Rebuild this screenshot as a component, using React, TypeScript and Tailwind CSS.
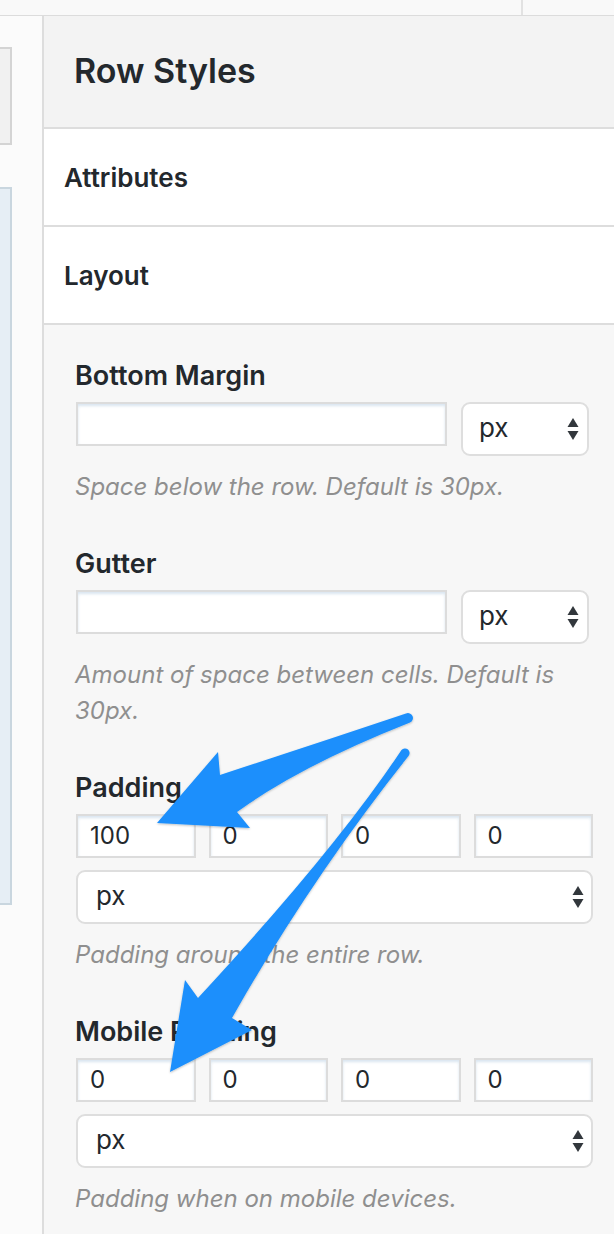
import React from "react";

const SelectArrows = () => (
  <svg width="12" height="26" viewBox="0 0 12 26" className="shrink-0">
    <path d="M6 2 L11.5 11 L0.5 11 Z" fill="#32373c" />
    <path d="M6 24 L11.5 15 L0.5 15 Z" fill="#32373c" />
  </svg>
);

const TextInput = ({ value, className = "" }: { value?: string; className?: string }) => (
  <div
    className={
      "h-[44px] bg-white border-2 border-[#dcdcdc] shadow-[inset_0_2px_3px_rgba(120,160,200,0.28)] flex items-center pl-[12px] text-[24px] text-[#23282d] " +
      className
    }
  >
    {value}
  </div>
);

const Select = ({ className = "" }: { className?: string }) => (
  <div
    className={
      "h-[54px] bg-white border-2 border-[#dedede] rounded-[9px] flex items-center justify-between pl-[16px] text-[26px] text-[#23282d] " +
      className
    }
  >
    <span className="leading-none -mt-[2px]">px</span>
    <SelectArrows />
  </div>
);

const Label = ({ children }: { children: React.ReactNode }) => (
  <div className="text-[27px] leading-[36px] font-semibold text-[#23282d] mb-[8px]">{children}</div>
);

const Desc = ({ children }: { children: React.ReactNode }) => (
  <div className="text-[24px] leading-[36px] italic text-[#8f8f8f] mt-[13px]">{children}</div>
);

export default function App() {
  return (
    <div
      className="relative w-[614px] h-[1234px] overflow-hidden bg-[#fafafa]"
      style={{ fontFamily: "Inter, 'Noto Sans', sans-serif" }}
    >
      {/* top strip */}
      <div className="h-[16px] flex border-b border-[#dcdcdc] bg-[#f9f9f9]">
        <div className="w-[523px] border-r-2 border-[#e2e2e2]" />
        <div className="flex-1" />
      </div>

      <div className="flex h-[1218px]">
        {/* left column */}
        <div className="w-[44px] shrink-0 border-r-2 border-[#dddddd] bg-[#fbfbfb] pt-[31px]">
          <div className="w-[12px] h-[98px] bg-[#f1f1f1] border-y-2 border-r-2 border-[#d4d4d4]" />
          <div className="w-[12px] h-[718px] mt-[42px] bg-[#e6eef5] border-y-2 border-r-2 border-[#c9d6df]" />
        </div>

        {/* right panel */}
        <div className="flex-1 flex flex-col">
          <div className="h-[113px] bg-[#f3f3f3] border-b-2 border-[#dddddd] flex items-center pl-[30px]">
            <span className="text-[34px] font-semibold text-[#23282d] -mt-[2px]">Row Styles</span>
          </div>
          <div className="h-[98px] bg-white border-b-2 border-[#dddddd] flex items-center pl-[20px]">
            <span className="text-[26px] font-semibold text-[#23282d]">Attributes</span>
          </div>
          <div className="h-[98px] bg-white border-b-2 border-[#dddddd] flex items-center pl-[20px]">
            <span className="text-[26px] font-semibold text-[#23282d]">Layout</span>
          </div>

          <div className="flex-1 bg-[#f7f7f7] pl-[31px] pr-[21px] pt-[33px]">
            {/* Bottom Margin */}
            <div>
              <Label>Bottom Margin</Label>
              <div className="flex items-start gap-[14px] mr-[4px] ml-[1px]">
                <TextInput className="flex-1" />
                <Select className="w-[128px] pr-[8px]" />
              </div>
              <Desc>Space below the row. Default is 30px.</Desc>
            </div>

            {/* Gutter */}
            <div className="mt-[41px]">
              <Label>Gutter</Label>
              <div className="flex items-start gap-[14px] mr-[4px] ml-[1px]">
                <TextInput className="flex-1" />
                <Select className="w-[128px] pr-[8px]" />
              </div>
              <Desc>Amount of space between cells. Default is 30px.</Desc>
            </div>

            {/* Padding */}
            <div className="mt-[41px]">
              <Label>Padding</Label>
              <div className="grid grid-cols-4 gap-[13px] ml-[1px]">
                <TextInput value="100" />
                <TextInput value="0" />
                <TextInput value="0" />
                <TextInput value="0" />
              </div>
              <Select className="mt-[12px] ml-[1px] pl-[18px] pr-[7px]" />
              <Desc>Padding around the entire row.</Desc>
            </div>

            {/* Mobile Padding */}
            <div className="mt-[41px]">
              <Label>Mobile Padding</Label>
              <div className="grid grid-cols-4 gap-[13px] ml-[1px]">
                <TextInput value="0" />
                <TextInput value="0" />
                <TextInput value="0" />
                <TextInput value="0" />
              </div>
              <Select className="mt-[12px] ml-[1px] pl-[18px] pr-[7px]" />
              <Desc>Padding when on mobile devices.</Desc>
            </div>
          </div>
        </div>
      </div>

      {/* annotation arrows overlay */}
      <svg
        className="absolute left-0 top-0 pointer-events-none"
        width="614"
        height="1234"
        viewBox="0 0 614 1234"
      >
        <defs>
          <filter id="sh" x="-20%" y="-20%" width="140%" height="140%">
            <feDropShadow dx="0" dy="1" stdDeviation="1.2" floodColor="#000" floodOpacity="0.25" />
          </filter>
        </defs>
        <g fill="#1b8ffc" filter="url(#sh)">
          <path d="M406 713.5 Q315 744 220 775 L218 752 L157 823 L250 828 L237 812 Q300 766 410 722.5 A4.5 4.5 0 0 0 406 713.5 Z" />
          <path d="M401.5 750 Q335 850 198 998 L185 980 L170 1072 L252 1030 L232 1018 Q310 880 408.5 756 A4 4 0 0 0 401.5 750 Z" />
        </g>
      </svg>
    </div>
  );
}
